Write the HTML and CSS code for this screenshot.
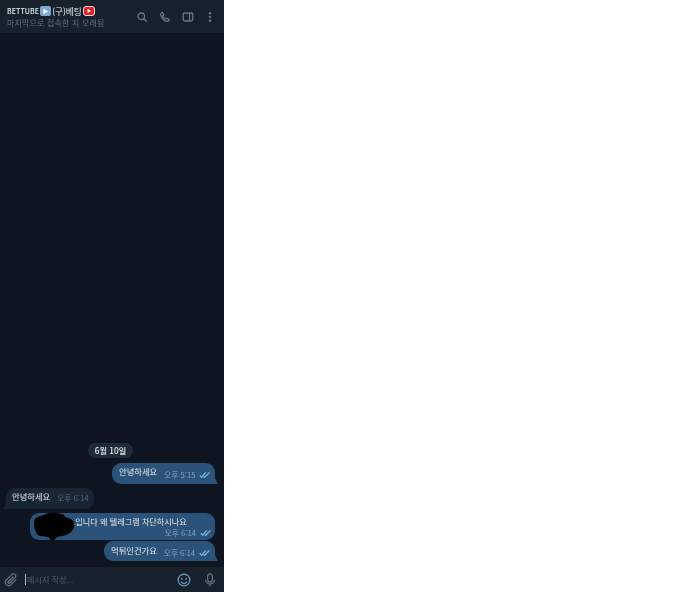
FILE: index.html
```html
<!DOCTYPE html>
<html lang="ko">
<head>
<meta charset="utf-8">
<title>BETTUBE</title>
<link rel="stylesheet" href="styles.css">
</head>
<body>
<div class="app">
  <header class="top">
    <div class="peer">
      <div class="name"><span class="brand">BETTUBE</span><span class="play-box"><svg viewBox="0 0 10 10" width="7" height="7"><path d="M2 1l7 4-7 4z" fill="#f3f6f9"/></svg></span><span class="old">(구)베팅</span><span class="yt"><svg viewBox="0 0 10 10" width="6" height="6"><path d="M2.5 1.5l6 3.5-6 3.5z" fill="#fff"/></svg></span></div>
      <div class="status">마지막으로 접속한 지 오래됨</div>
    </div>
    <div class="tools">
      <svg class="ico" viewBox="0 0 24 24"><circle cx="10.5" cy="10.5" r="6.5"/><path d="M15.5 15.5l6 6"/></svg>
      <svg class="ico" viewBox="0 0 24 24"><path d="M6.5 2.5l3 5-2 2.500c1 2.500 3 4.500 5.500 5.500l2.500-1.500 5 3.500c-.8 2.500-2.500 3.500-5 3C10 19.500 4.500 13.500 3.500 8 3.200 5.500 4.500 3.500 6.500 2.500z"/></svg>
      <svg class="ico" viewBox="0 0 24 24"><rect x="2.500" y="4" width="19" height="16" rx="3"/><path d="M15 4v16"/></svg>
      <svg class="ico dots" viewBox="0 0 24 24"><circle cx="12" cy="4.500" r="2.500"/><circle cx="12" cy="12" r="2.500"/><circle cx="12" cy="19.500" r="2.500"/></svg>
    </div>
  </header>
  <main class="log">
    <div class="date">6월 10일</div>
    <div class="msg out first">
      <span class="text">안녕하세요</span>
      <span class="meta">오후 5:15<svg class="check" viewBox="0 0 16 10"><path d="M1 5.500l2.500 2.500L9 1.500M6.500 7l1 1 6.500-6.500"/></svg></span>
    </div>
    <div class="msg in">
      <span class="text">안녕하세요</span>
      <span class="meta">오후 6:14</span>
    </div>
    <div class="msg out block">
      <svg class="blot" viewBox="0 0 42 28"><path d="M2 6C4 3 9 3 13 1c6-2 14-1 18 1 1 3 5 3 7 4 3 2 4 5 3 8-1 3-3 6-6 7-4 2-8 2-11 3-1 1-3 4-5 4-2-1-2-3-4-4-4-1-9 0-11-3C1 17 0 10 2 6z"/></svg>
      <div class="text">.입니다 왜 텔레그램 차단하시나요</div>
      <div class="meta">오후 6:14<svg class="check" viewBox="0 0 16 10"><path d="M1 5.500l2.500 2.500L9 1.500M6.500 7l1 1 6.500-6.500"/></svg></div>
    </div>
    <div class="msg out last">
      <span class="text">먹튀인건가요</span>
      <span class="meta">오후 6:14<svg class="check" viewBox="0 0 16 10"><path d="M1 5.500l2.500 2.500L9 1.500M6.500 7l1 1 6.500-6.500"/></svg></span>
    </div>
  </main>
  <footer class="composer">
    <svg class="ico clip" viewBox="0 0 24 24"><path d="M21 11l-9 9a5.500 5.500 0 0 1-8-8l9.500-9.500a3.800 3.800 0 0 1 5.400 5.400l-9 9.200a1.700 1.700 0 0 1-2.500-2.500L16 6.500"/></svg>
    <div class="field"><span class="caret"></span>메시지 작성...</div>
    <svg class="ico smile" viewBox="0 0 24 24"><circle cx="12" cy="12" r="10"/><circle class="eye" cx="8.500" cy="10" r="1.500"/><circle class="eye" cx="15.500" cy="10" r="1.500"/><path d="M7 14.500c1 2.200 3 3.300 5 3.300s4-1.100 5-3.300"/></svg>
    <svg class="ico mic" viewBox="0 0 24 24"><rect x="8" y="1.500" width="8" height="14" rx="4"/><path d="M4.500 11.500a7.500 7.500 0 0 0 15 0M12 19v4"/></svg>
  </footer>
</div>
</body>
</html>
```

FILE: styles.css
```css
* { box-sizing: border-box; }
html, body { margin: 0; height: 100%; background: #fff; }
body { font-family: "Noto Sans CJK KR", "Noto Sans", sans-serif; }
.app {
  width: 224px;
  height: 592px;
  background: #0e1520;
  display: flex;
  flex-direction: column;
  overflow: hidden;
  filter: blur(0.55px);
}
.top {
  height: 33px;
  flex: none;
  background: #17212b;
  display: flex;
  justify-content: space-between;
  align-items: center;
  padding: 0 8px 0 7px;
}
.name {
  display: flex;
  align-items: center;
  height: 11px;
  color: #e4e9ed;
}
.brand { font-size: 7px; font-weight: 500; letter-spacing: 0.1px; }
.old { font-size: 8.6px; font-weight: 400; margin-right: 1px; }
.play-box {
  width: 11px;
  height: 10px;
  margin: 0 1px;
  background: #7fa8d0;
  border-radius: 2px;
  display: flex;
  align-items: center;
  justify-content: center;
}
.yt {
  width: 12px;
  height: 10px;
  background: #e0222a;
  border: 1px solid #f3d8d8;
  border-radius: 3px;
  display: flex;
  align-items: center;
  justify-content: center;
}
.status { font-size: 7.9px; line-height: 11px; color: #5c7084; letter-spacing: 0.25px; }
.tools { display: flex; align-items: center; gap: 11px; }
.ico {
  width: 12px;
  height: 12px;
  fill: none;
  stroke: #65777f;
  stroke-width: 2.6;
  flex: none;
}
.dots { fill: #65777f; stroke: none; margin-left: -1px; }
.log {
  flex: 1;
  min-height: 0;
  display: flex;
  flex-direction: column;
  justify-content: flex-end;
  align-items: flex-start;
  padding: 0 9px 6px 6px;
}
.date {
  align-self: center;
  height: 15px;
  line-height: 15px;
  padding: 0 7px;
  margin-bottom: 5px;
  border-radius: 8px;
  background: #1e2c3a;
  color: #e4e9ed;
  font-size: 8.2px;
  font-weight: 500;
}
.msg {
  position: relative;
  font-size: 8.3px;
  font-weight: 400;
  color: #e4e9ed;
  border-radius: 9px;
}
.msg .text { line-height: 12px; }
.meta {
  font-size: 7.7px;
  font-weight: 400;
  line-height: 10px;
  color: #7fa5c8;
  display: inline-flex;
  align-items: center;
  white-space: nowrap;
}
.check {
  width: 12px;
  height: 8px;
  margin-left: 4px;
  fill: none;
  stroke: #74b2e6;
  stroke-width: 1.8;
}
.out {
  align-self: flex-end;
  background: #2b5278;
}
.in {
  background: #182533;
}
.first, .last { border-bottom-right-radius: 0; }
.in { border-bottom-left-radius: 0; }
.first::after, .last::after, .in::after {
  content: "";
  position: absolute;
  bottom: 0;
  width: 3px;
  height: 6px;
}
.first::after, .last::after {
  right: -3px;
  background: #2b5278;
  clip-path: polygon(0 0, 100% 100%, 0 100%);
}
.in::after {
  left: -3px;
  background: #182533;
  clip-path: polygon(100% 0, 100% 100%, 0 100%);
}
.in .meta { color: #566b7e; margin-left: 7px; position: relative; top: 2px; }
.first, .last, .in { display: flex; align-items: center; height: 21px; padding: 0 3px 5px 7px; }
.first .meta, .last .meta { margin-left: 7px; position: relative; top: 4px; }
.first { margin-bottom: 4px; width: 103px; }
.in { width: 88px; margin-bottom: 4px; padding-left: 6px; }
.block {
  width: 185px;
  height: 27px;
  padding: 3px 3px 0 43px;
  margin-bottom: 1px;
}
.block .text { white-space: nowrap; font-size: 8.15px; line-height: 11px; }
.block .meta { display: flex; justify-content: flex-end; padding-top: 1px; }
.blot {
  position: absolute;
  left: 3px;
  top: 0;
  width: 42px;
  height: 28px;
  fill: #000;
}
.last { width: 111px; height: 20px; padding-bottom: 3px; }
.last .meta { top: 3px; }
.composer {
  height: 25px;
  flex: none;
  background: #17212b;
  display: flex;
  align-items: center;
  padding: 0 7px 0 4px;
}
.clip { width: 14px; height: 14px; margin-right: 7px; stroke-width: 2; }
.field {
  flex: 1;
  font-size: 8.1px;
  color: #4f6173;
  display: flex;
  align-items: center;
}
.caret { width: 1px; height: 11px; background: #a8b6c2; margin-right: 1px; }
.smile { width: 14px; height: 14px; stroke: #6ea3c8; stroke-width: 2; margin-right: 12px; }
.eye { fill: #6ea3c8; stroke: none; }
.mic { width: 14px; height: 16px; stroke-width: 2; }
```
